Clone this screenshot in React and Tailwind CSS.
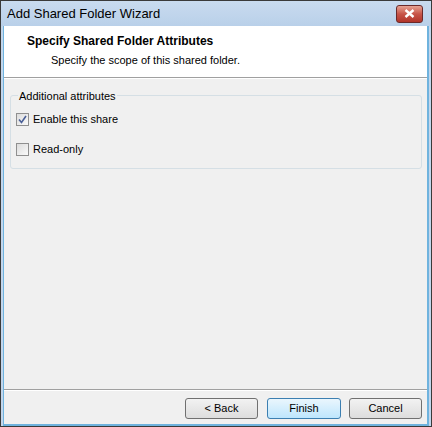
function Checkbox({ checked }) {
  return (
    <span className="relative flex h-[13px] w-[13px] shrink-0 items-center justify-center border border-[#8f8f8f] bg-gradient-to-br from-[#dcdcdc] to-[#fafafa]">
      {checked && (
        <svg width="9" height="9" viewBox="0 0 9 9" className="absolute">
          <path d="M1 4.5 L3.5 7.5 L8 1" fill="none" stroke="#4a5f97" strokeWidth="1.6" />
        </svg>
      )}
    </span>
  );
}

function WizButton({ children, active, width }) {
  return (
    <button
      className={`flex h-[21px] items-center justify-center rounded-[3px] border text-[11px] text-black ${width} ${
        active
          ? "border-[#3c7fb1] bg-gradient-to-b from-[#eaf6fd] to-[#bee6fd]"
          : "border-[#707070] bg-gradient-to-b from-[#f2f2f2] to-[#dddddd]"
      }`}
    >
      {children}
    </button>
  );
}

export default function App() {
  return (
    <div
      className="flex h-[427px] w-[432px] flex-col border border-[#3a3a3a] bg-[#c2d6ec]"
      style={{ fontFamily: "'Liberation Sans', Arial, sans-serif" }}
    >
      {/* title bar */}
      <div className="flex h-[25px] shrink-0 items-center justify-between bg-gradient-to-b from-[#c9dbef] to-[#b9d0e9] pl-[6px] pr-[8px]">
        <span className="text-[13px] text-black">Add Shared Folder Wizard</span>
        <div className="flex h-[18px] w-[27px] items-center justify-center rounded-[3px] border border-[#6b2a2a] bg-gradient-to-b from-[#e6a394] via-[#c75448] to-[#b1342a]">
          <svg width="11" height="9" viewBox="0 0 11 9">
            <path d="M1.5 1 L9.5 8 M9.5 1 L1.5 8" stroke="white" strokeWidth="2.4" />
          </svg>
        </div>
      </div>

      <div className="mx-[2px] flex flex-1 flex-col border-b-2 border-l border-r-2 border-[#6fb3de] bg-[#f0f0f0]">
        {/* header */}
        <div className="flex h-[51px] flex-col bg-white pl-[23px] pt-[6px]">
          <span className="text-[12px] font-bold text-black">Specify Shared Folder Attributes</span>
          <span className="pl-[24px] pt-[2px] text-[11px] text-black">Specify the scope of this shared folder.</span>
        </div>
        <div className="h-[1px] bg-[#a0a0a0]" />
        <div className="h-[1px] bg-white" />

        {/* group box */}
        <div className="flex-1 pl-[6px] pr-[5px] pt-[16px]">
          <div className="relative h-[74px] rounded-[3px] border border-[#d5dfe5]">
            <span className="absolute left-[7px] top-[-8px] bg-[#f0f0f0] px-[1px] text-[11px] text-black">
              Additional attributes
            </span>
            <div className="flex flex-col gap-[13px] pl-[5px] pt-[15px]">
              <label className="flex h-[17px] items-center gap-[4px] text-[11px] text-black">
                <Checkbox checked />
                Enable this share
              </label>
              <label className="flex h-[17px] items-center gap-[4px] text-[11px] text-black">
                <Checkbox />
                Read-only
              </label>
            </div>
          </div>
        </div>

        {/* footer */}
        <div className="h-[1px] bg-[#a0a0a0]" />
        <div className="h-[1px] bg-white" />
        <div className="flex h-[33px] items-start justify-end gap-[8px] pr-[5px] pt-[7px]">
          <WizButton width="w-[73px] mr-[1px]">&lt; Back</WizButton>
          <WizButton width="w-[74px]" active>Finish</WizButton>
          <WizButton width="w-[73px]">Cancel</WizButton>
        </div>
      </div>
    </div>
  );
}
